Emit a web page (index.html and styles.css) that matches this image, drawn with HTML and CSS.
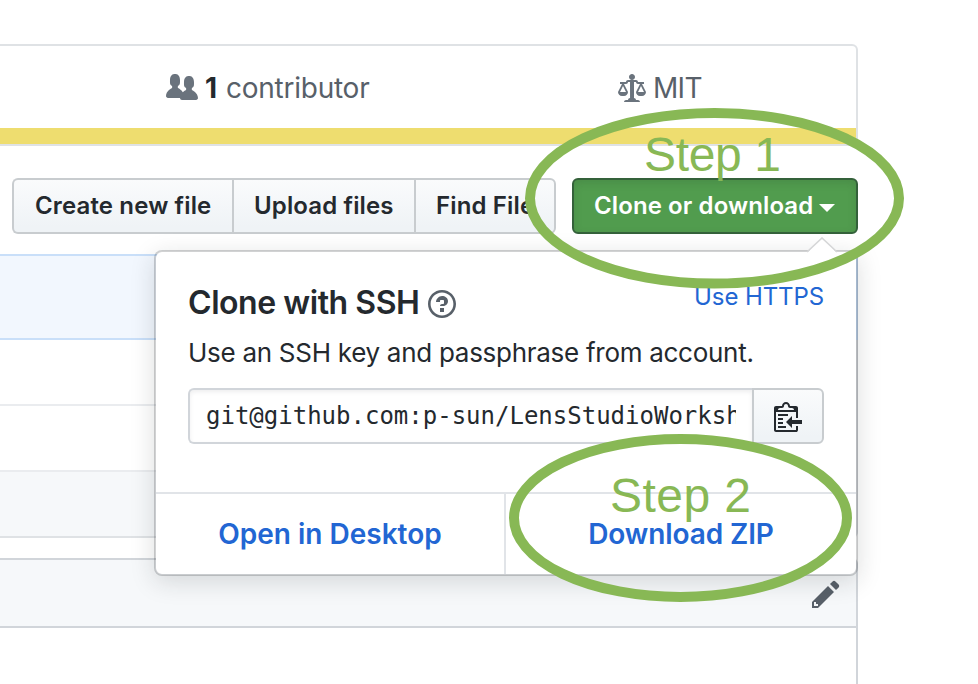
FILE: index.html
```html
<!DOCTYPE html>
<html lang="en">
<head>
<meta charset="utf-8">
<title>Clone or download</title>
<link rel="stylesheet" href="styles.css">
</head>
<body>
<main class="page">
  <section class="summary">
    <div class="stats">
      <div class="stat stat-people">
        <svg class="icon" width="32" height="32" viewBox="0 0 16 16"><path fill-rule="evenodd" d="M16 12.999c0 .439-.45 1-1 1H7.995c-.539 0-.994-.447-.995-.999H1c-.54 0-1-.561-1-1 0-2.634 3-4 3-4s.229-.409 0-1c-.841-.621-1.058-.59-1-3 .058-2.419 1.367-3 2.5-3s2.442.58 2.5 3c.058 2.41-.159 2.379-1 3-.229.59 0 1 0 1s1.549.711 2.42 2.088C9.196 9.369 10 8.999 10 8.999s.229-.409 0-1c-.841-.62-1.058-.59-1-3 .058-2.419 1.367-3 2.5-3s2.437.581 2.495 3c.059 2.41-.158 2.38-1 3-.229.59 0 1 0 1s3.005 1.366 3.005 4z"/></svg>
        <b class="count">1</b><span class="label">contributor</span>
      </div>
      <div class="stat stat-license">
        <svg class="icon" width="28" height="32" viewBox="0 0 14 16"><path fill-rule="evenodd" d="M7 4c-.83 0-1.5-.67-1.5-1.5S6.17 1 7 1s1.5.67 1.5 1.5S7.83 4 7 4zm7 6c0 1.11-.89 2-2 2h-1c-1.11 0-2-.89-2-2l2-4h-1c-.55 0-1-.45-1-1H8v8c.42 0 1 .45 1 1h1c.42 0 1 .45 1 1H3c0-.55.58-1 1-1h1c0-.55.58-1 1-1h.03L6 5H5c0 .55-.45 1-1 1H3l2 4c0 1.11-.89 2-2 2H2c-1.11 0-2-.89-2-2l2-4H1V5h3c0-.55.45-1 1-1h4c.55 0 1 .45 1 1h3v1h-1l2 4zM2.5 7L1 10h3L2.5 7zM13 10l-1.5-3-1.5 3h3z"/></svg>
        <span class="label license">MIT</span>
      </div>
    </div>
    <div class="language-bar"></div>
  </section>

  <nav class="actions">
    <div class="button-group">
      <button class="btn create"><span>Create new file</span></button>
      <button class="btn upload"><span>Upload files</span></button>
      <button class="btn find"><span>Find File</span></button>
    </div>
    <div class="clone">
      <button class="btn primary"><span>Clone or download</span><i class="caret"></i></button>
      <div class="popover">
        <svg class="arrow" width="32" height="16" viewBox="0 0 32 16"><path class="arrow-fill" d="M1 16L16 1L31 16Z"/><path class="arrow-line" d="M1 15L16 1L31 15"/></svg>
        <div class="popover-body">
          <header class="popover-head">
            <h4>Clone with SSH</h4>
            <svg class="help" width="28" height="32" viewBox="0 0 14 16"><path fill-rule="evenodd" d="M6 10h2v2H6v-2zm4-3.5C10 8.64 8 9 8 9H6c0-.55.45-1 1-1h.5c.28 0 .5-.22.5-.5v-1c0-.28-.22-.5-.5-.5h-1c-.28 0-.5.22-.5.5V7H4c0-1.5 1.5-3 3-3s3 1 3 2.5zM7 2.3c3.14 0 5.7 2.56 5.7 5.7s-2.56 5.7-5.7 5.7A5.71 5.71 0 0 1 1.3 8c0-3.14 2.56-5.7 5.7-5.7zM7 1C3.14 1 0 4.14 0 8s3.14 7 7 7 7-3.14 7-7-3.14-7-7-7z"/></svg>
            <a class="https">Use HTTPS</a>
          </header>
          <p class="hint">Use an SSH key and passphrase from account.</p>
          <div class="url-row">
            <div class="url"><div class="url-text">git@github.com:p-sun/LensStudioWorksh</div></div>
            <button class="copy"><svg width="28" height="32" viewBox="0 0 14 16"><path fill-rule="evenodd" d="M2 13h4v1H2v-1zm5-6H2v1h5V7zm2 3V8l-3 3 3 3v-2h5v-2H9zM4.500 9H2v1h2.500V9zM2 12h2.500v-1H2v1zm9 1h1v2c-.02.28-.11.52-.3.7-.19.18-.42.28-.7.3H1c-.55 0-1-.45-1-1V4c0-.55.45-1 1-1h3c0-1.110.89-2 2-2 1.110 0 2 .89 2 2h3c.55 0 1 .45 1 1v5h-1V6H1v9h10v-2zM2 5h8c0-.55-.45-1-1-1H8c-.55 0-1-.45-1-1s-.45-1-1-1-1 .45-1 1-.45 1-1 1H3c-.55 0-1 .45-1 1z"/></svg></button>
          </div>
        </div>
        <footer class="popover-links">
          <a class="desktop">Open in Desktop</a>
          <a class="zip">Download ZIP</a>
        </footer>
      </div>
    </div>
  </nav>

  <section class="files">
    <div class="commit"></div>
    <div class="row first"></div>
    <div class="row"></div>
    <div class="row shaded"></div>
  </section>
  <section class="readme">
    <div class="readme-head">
      <svg class="pencil" width="28" height="32" viewBox="0 0 14 16"><path fill-rule="evenodd" d="M0 12v3h3l8-8-3-3-8 8zm3 2H1v-2h1v1h1v1zm10.300-9.300L12 6 9 3l1.300-1.300a.996.996 0 0 1 1.410 0l1.590 1.590c.39.39.39 1.020 0 1.410z"/></svg>
    </div>
  </section>
</main>
<svg class="annotations" width="978" height="684" viewBox="0 0 978 684">
  <ellipse cx="714.5" cy="198.300" rx="184.500" ry="85.300"/>
  <ellipse cx="680.5" cy="518" rx="166.500" ry="79"/>
  <text x="644" y="171" textLength="137">Step 1</text>
  <text x="610" y="512" textLength="141">Step 2</text>
</svg>
</body>
</html>
```
FILE: styles.css
```css
* { box-sizing: border-box; }
body {
  margin: 0;
  width: 978px;
  height: 684px;
  overflow: hidden;
  position: relative;
  background: #fff;
  color: #24292e;
  font-family: Inter, "Liberation Sans", sans-serif;
}
svg { display: block; flex: none; }
button { font: inherit; color: inherit; margin: 0; }
.page { width: 858px; height: 684px; padding-top: 44px; display: flex; flex-direction: column; }
.summary { height: 102px; border: 2px solid #dfe2e5; border-left: 0; border-top-right-radius: 6px; flex: none; }
.stats { height: 82px; display: flex; }
.stat { display: flex; align-items: center; padding-top: 2px; font-size: 28px; color: #586069; }
.stat-people { padding-left: 166px; width: 618px; }
.icon { fill: #6a737d; }
.count { color: #24292e; font-weight: 700; margin-left: 7px; width: 21px; }
.label { margin-left: 0; white-space: nowrap; letter-spacing: -0.25px; }
.license { margin-left: 7px; letter-spacing: -0.7px; }
.language-bar { height: 16px; background: #eedd6f; }

.actions { display: flex; justify-content: space-between; padding-left: 12px; margin-top: 32px; height: 56px; flex: none; }
.button-group { display: flex; }
.btn {
  height: 56px;
  display: flex;
  align-items: center;
  padding: 0 0 2px 20px;
  border: 2px solid #c8cccf;
  border-right-width: 0;
  background: linear-gradient(#fafbfc, #eff3f6 90%);
  font-size: 24px;
  font-weight: 600;
  letter-spacing: 0.14px;
  white-space: nowrap;
}
.create { width: 220px; border-radius: 6px 0 0 6px; padding-left: 21px; }
.upload { width: 182px; }
.find { width: 142px; border-right-width: 2px; border-radius: 0 6px 6px 0; }
.clone { position: relative; }
.primary {
  width: 286px;
  border: 2px solid #34613a;
  border-radius: 6px;
  background: #519c4e;
  box-shadow: inset 0 3px 8px rgba(27, 31, 35, .12);
  color: #fff;
  letter-spacing: 0.1px;
}
.caret { border: 8px solid transparent; border-top-color: #fff; border-bottom: 0; margin: 5px 0 0 6px; }

.popover {
  position: absolute;
  top: 72px;
  right: 0;
  width: 704px;
  height: 326px;
  border: 2px solid rgba(27, 31, 35, .2);
  border-radius: 8px;
  background: #fff;
  background-clip: padding-box;
  box-shadow: 0 6px 24px rgba(27, 31, 35, .15);
}
.arrow { position: absolute; top: -15px; right: 18px; }
.arrow-fill { fill: #fff; }
.arrow-line { fill: none; stroke: #d5d6d7; stroke-width: 1.6; }
.popover-body { height: 240px; padding: 32px 32px 0; }
.popover-head { display: flex; align-items: flex-start; height: 52px; }
.popover-head h4 { margin: 0; font-size: 32px; line-height: 38px; font-weight: 600; letter-spacing: -0.45px; white-space: nowrap; width: 240px; }
.help { fill: #586069; margin-top: 4px; }
.https { margin-left: auto; font-size: 24px; line-height: 26px; letter-spacing: -0.1px; color: #2266d3; white-space: nowrap; }
.hint { margin: 0; font-size: 26px; line-height: 34px; letter-spacing: -0.28px; white-space: nowrap; }
.url-row { display: flex; margin-top: 18px; }
.url { width: 564px; height: 56px; border: 2px solid #d1d5da; border-right: 0; border-radius: 6px 0 0 6px; padding: 0 16px; box-shadow: inset 0 2px 4px rgba(27, 31, 35, .075); }
.url-text { overflow: hidden; white-space: nowrap; font: 24px/52px "DejaVu Sans Mono", monospace; }
.copy { width: 72px; height: 56px; padding: 0 0 0 20px; border: 2px solid #c8cccf; border-radius: 0 6px 6px 0; background: linear-gradient(#fafbfc, #eff3f6 90%); }
.copy svg { fill: #24292e; }
.popover-links { display: flex; height: 82px; border-top: 2px solid #e1e4e8; font-size: 28px; font-weight: 600; color: #2266d3; white-space: nowrap; }
.popover-links a { display: flex; align-items: center; justify-content: center; }
.desktop { width: 350px; border-right: 2px solid #e1e4e8; }
.zip { width: 350px; letter-spacing: -0.1px; }

.files { height: 284px; margin-top: 20px; border-right: 2px solid #dfe2e5; border-bottom: 2px solid #dfe2e5; border-bottom-right-radius: 6px; flex: none; }
.commit { height: 86px; margin-right: -2px; background: #f2f7fe; border: 2px solid #c9dff9; border-left: 0; }
.row { height: 66px; border-top: 2px solid #eaecef; }
.row.first { height: 64px; border-top: 0; }
.shaded { background: #f6f8fa; }
.readme { flex: 1; margin-top: 20px; border: 2px solid #d1d5da; border-left: 0; border-bottom: 0; border-top-right-radius: 6px; }
.readme-head { height: 68px; background: #f6f8fa; border-bottom: 2px solid #d1d5da; display: flex; justify-content: flex-end; padding: 18px 16px 0 0; }
.pencil { fill: #586069; }
.annotations { position: absolute; inset: 0; }
.annotations ellipse { fill: none; stroke: #88b855; stroke-width: 10; }
.annotations text { fill: #88b855; font: 48px "Liberation Sans", sans-serif; }
```
